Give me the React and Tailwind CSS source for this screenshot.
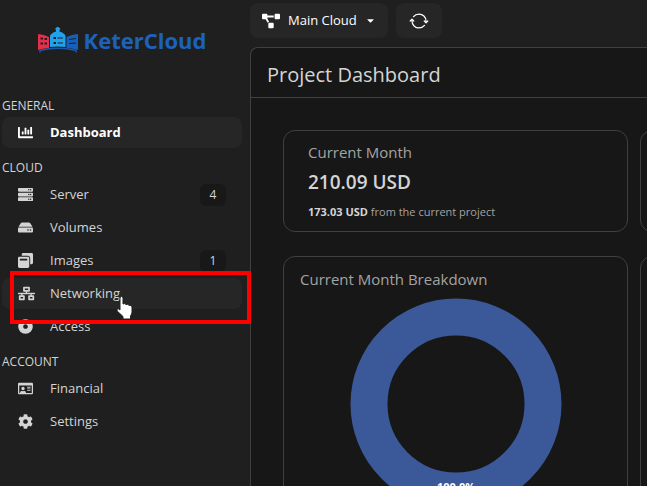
import { FaChartBar, FaServer, FaHdd, FaWindowRestore, FaNetworkWired, FaDotCircle, FaRegIdCard, FaCog, FaProjectDiagram, FaCaretDown } from "react-icons/fa";
import { IoSyncOutline } from "react-icons/io5";

const sections = [
  { title: "GENERAL", items: [{ label: "Dashboard", icon: FaChartBar, active: true }] },
  {
    title: "CLOUD",
    items: [
      { label: "Server", icon: FaServer, count: 4 },
      { label: "Volumes", icon: FaHdd },
      { label: "Images", icon: FaWindowRestore, count: 1 },
      { label: "Networking", icon: FaNetworkWired, hovered: true },
      { label: "Access", icon: FaDotCircle },
    ],
  },
  {
    title: "ACCOUNT",
    items: [
      { label: "Financial", icon: FaRegIdCard },
      { label: "Settings", icon: FaCog },
    ],
  },
];

function Logo() {
  return (
    <a href="#home" className="flex h-20 items-center justify-center gap-1.5 pr-1.5">
      <svg viewBox="0 0 40 26" className="h-[26px] w-10 shrink-0">
        <path fill="#e62d4b" d="M0 7q6 .5 11 3v11q-6 .3-11 2z" />
        <path fill="#22a2ec" d="M12 9q1-3 6-4.500V3l-1-1 2-2h1.500l2 2-1 1v1.500q5 1.500 6 4.500v11q-8-1-15.500 0z" />
        <path fill="#1560bd" d="M28.500 10q5-2.500 11.500-3v16q-5-1.700-11.500-2z" />
        <path
          fill="#1f1f1f"
          d="M2.500 10.500h2.500v2H2.500zM6.500 11h2.500v2H6.500zM2.500 15.500h2.500v2H2.500zM6.500 15.500h2.500v2H6.500zM15.500 10h2.500v2h-2.500zM19.500 10.500h5.500v1h-5.500zM15.500 15h2.500v2h-2.500zM19.500 15.500h5.500v1h-5.500zM31 12l7-1v1l-7 1zM31 16l7-.5v1l-7 .5z"
        />
        <path fill="none" stroke="#1f55a8" strokeWidth="1.500" d="M2 25.500v-2q18-4.500 36 0v2" />
      </svg>
      <span className="text-[22px] font-bold text-[#1c62bd]">KeterCloud</span>
    </a>
  );
}

function NavItem({ item }) {
  const Icon = item.icon;
  return (
    <li className="relative">
      <a
        href={`#${item.label.toLowerCase()}`}
        className={`flex h-[31px] items-center rounded-lg px-4 text-[13px] ${
          item.active ? "bg-[#262626] font-bold text-white" : "text-[#d4d4d4]"
        } ${item.hovered ? "bg-[#262626]" : ""}`}
      >
        <span className="w-8">
          <Icon size={item.hovered ? 17 : 15} />
        </span>
        <span className="flex-1">{item.label}</span>
        {item.count && (
          <span className="flex h-[22px] w-[26px] items-center justify-center rounded-md bg-[#181818] text-xs">
            {item.count}
          </span>
        )}
      </a>
      {item.hovered && (
        <>
          <div className="absolute -top-[7px] -right-[9px] left-2 z-10 h-[53px] border-4 border-[#ff0000]"></div>
          <Pointer />
        </>
      )}
    </li>
  );
}

function Pointer() {
  return (
    <svg viewBox="0 0 18 24" className="absolute top-[18px] left-[114px] z-20 h-6 w-[18px]">
      <path
        fill="#fff"
        stroke="#222"
        strokeWidth="1"
        d="M4 2q0-1.500 1.500-1.500T7 2v6q2-1.200 3 .5 2-.7 3 .8 2.500-.5 3 1.700v5q0 2-1.500 4v3H7V20.500L1.200 15q-1-2 1-2.300L4 14z"
      />
    </svg>
  );
}

function Card({ className = "", children }) {
  return <section className={`rounded-xl border border-[#404040] ${className}`}>{children}</section>;
}

export default function App() {
  return (
    <div className="flex h-screen overflow-hidden bg-[#1f1f1f] font-['Open_Sans',sans-serif] text-[#d4d4d4]">
      <aside className="w-[250px] shrink-0">
        <Logo />
        <nav className="flex flex-col gap-[11px] pt-[17px] pr-2 pl-0.5">
          {sections.map((section) => (
            <div key={section.title}>
              <h2 className="mb-0.5 text-xs leading-[18px]">{section.title}</h2>
              <ul className="flex flex-col gap-0.5">
                {section.items.map((item) => (
                  <NavItem key={item.label} item={item} />
                ))}
              </ul>
            </div>
          ))}
        </nav>
      </aside>

      <main className="flex min-w-0 flex-1 flex-col">
        <header className="flex gap-2 pt-[3px] pb-[9px]">
          <button className="flex h-[35px] items-center gap-2 rounded-lg bg-[#262626] px-3 text-[13px] text-white">
            <FaProjectDiagram size={18} />
            Main Cloud
            <FaCaretDown size={11} />
          </button>
          <button
            aria-label="Refresh"
            className="flex h-[35px] w-[46px] items-center justify-center rounded-lg bg-[#262626] text-white"
          >
            <IoSyncOutline size={20} />
          </button>
        </header>

        <div className="min-h-0 flex-1 overflow-hidden rounded-tl-lg border-t border-l border-[#404040] bg-[#171717]">
          <h1 className="border-b border-[#404040] px-4 pt-2.5 pb-1.5 text-xl leading-[33px]">Project Dashboard</h1>
          <div className="grid grid-cols-[345px_345px] gap-x-3 gap-y-6 px-8 pt-8">
            <Card className="h-[102px] px-6 py-[9px]">
              <h3 className="text-[15px] leading-6 text-[#a3a3a3]">Current Month</h3>
              <p className="text-[19px] leading-9 font-semibold">210.09 USD</p>
              <p className="text-[11px] leading-6 text-[#a3a3a3]">
                <b className="font-bold text-[#d4d4d4]">173.03 USD</b> from the current project
              </p>
            </Card>
            <Card />
            <Card className="h-[310px] px-4 py-2.5">
              <h3 className="text-[15px] leading-6 text-[#a3a3a3]">Current Month Breakdown</h3>
              <svg viewBox="0 0 212 212" className="mx-auto mt-[7px] size-[212px]">
                <circle cx="106" cy="106" r="87" fill="none" stroke="#3b5998" strokeWidth="37" />
                <text x="106" y="193" textAnchor="middle" fill="#fff" fontSize="11" fontWeight="700">
                  100.0%
                </text>
              </svg>
            </Card>
            <Card />
          </div>
        </div>
      </main>
    </div>
  );
}
